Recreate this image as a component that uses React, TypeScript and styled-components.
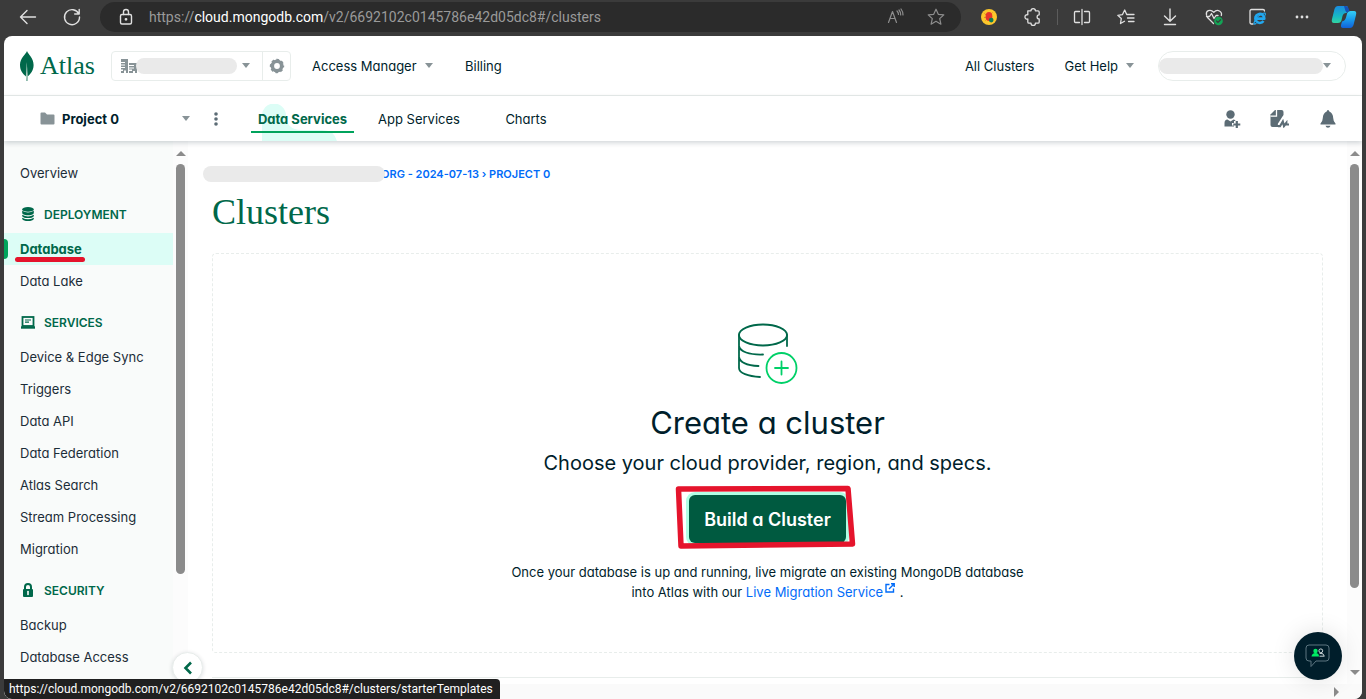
import React from "react";
import styled, { createGlobalStyle, css } from "styled-components";

const sans = `Inter, "Liberation Sans", sans-serif`;
const serif = `"Liberation Serif", serif`;
const system = `Roboto, "Open Sans", sans-serif`;
const green = "#00684a";
const ink = "#001e2b";
const line = "#e8edeb";
const grey = "#889397";
const slate = "#5c6c75";

const Global = createGlobalStyle`
  * { box-sizing: border-box; }
  body { margin: 0; background: #3b3b3b; font-family: ${sans}; font-feature-settings: "cv11"; font-size: 13px; color: ${ink}; }
  button { font: inherit; font-feature-settings: inherit; color: inherit; background: none; border: 0; padding: 0; margin: 0; cursor: pointer; }
  a { color: inherit; text-decoration: none; }
  h1, h2, p, ul { margin: 0; padding: 0; font-weight: 400; }
  ul { list-style: none; }
  svg { display: block; flex: none; }
`;

const Window = styled.div`
  position: relative;
  display: flex;
  flex-direction: column;
  height: 100vh;
  overflow: hidden;
`;

/* Browser toolbar */
const Toolbar = styled.div`
  display: flex;
  align-items: center;
  height: 36px;
  flex: none;
  padding: 0 2px 2px 6px;
  color: #e0e0e0;
`;
const ToolButton = styled.button<{ $w?: number }>`
  display: flex;
  align-items: center;
  justify-content: center;
  width: ${(p) => p.$w ?? 44}px;
  height: 30px;
`;
const AddressBar = styled.div`
  display: flex;
  align-items: center;
  flex: 1;
  height: 30px;
  margin: 0 6px;
  padding: 0 5px 0 6px;
  border-radius: 15px;
  background: #2b2b2b;
`;
const Address = styled.span`
  flex: 1;
  margin-left: 3px;
  font-family: ${system};
  font-size: 14px;
  color: #9a9a9a;
  white-space: nowrap;
  strong { font-weight: 400; color: #fff; }
`;
const ToolDivider = styled.span`
  width: 1px;
  height: 16px;
  margin: 0 2px;
  background: #5c5c5c;
`;

/* Web page */
const Page = styled.div`
  display: flex;
  flex-direction: column;
  flex: 1;
  min-height: 0;
  margin: 0 4px;
  border-radius: 8px;
  background: #fff;
  overflow: hidden;
`;
const Header = styled.header`
  display: flex;
  align-items: center;
  height: 60px;
  flex: none;
  padding: 0 16px 0 15px;
  border-bottom: 1px solid ${line};
`;
const Brand = styled.a`
  display: flex;
  align-items: center;
  gap: 5px;
  width: 92px;
  font-family: ${serif};
  font-size: 26px;
  line-height: 30px;
  color: ${green};
`;
const OrgPicker = styled.div`
  display: flex;
  height: 30px;
  border: 1px solid ${line};
  border-radius: 4px;
`;
const Redacted = styled.span`
  display: block;
  flex: 1;
  height: 16px;
  border-radius: 8px;
  background: #eaeaea;
`;
const OrgButton = styled.button`
  display: flex;
  align-items: center;
  width: 151px;
  padding: 0 12px 0 9px;
  border-right: 1px solid ${line};
  ${Redacted} { margin: 0 5px 0 -1px; }
`;
const GearButton = styled.button`
  display: flex;
  align-items: center;
  justify-content: center;
  width: 27px;
`;
const Caret = styled.span`
  width: 0;
  height: 0;
  border: 4px solid transparent;
  border-top: 5px solid ${grey};
  border-bottom: 0;
`;
const MainNav = styled.nav`
  display: grid;
  grid-template-columns: 153px auto;
  margin-left: 21px;
  flex: 1;
`;
const NavButton = styled.button`
  display: flex;
  align-items: center;
  gap: 8px;
  line-height: 20px;
  white-space: nowrap;
`;
const HelpNav = styled.nav`
  display: flex;
  align-items: center;
  gap: 30px;
`;
const AccountButton = styled.button`
  display: flex;
  align-items: center;
  width: 188px;
  height: 30px;
  margin-left: 24px;
  padding-right: 14px;
  border: 1px solid ${line};
  border-radius: 15px;
`;

const ProjectBar = styled.div`
  position: relative;
  z-index: 1;
  display: flex;
  align-items: center;
  height: 45px;
  flex: none;
  padding: 0 10px 0 36px;
  box-shadow: 0 2px 5px rgba(0, 30, 43, 0.18);
`;
const ProjectButton = styled.button`
  display: flex;
  align-items: center;
  gap: 7px;
  width: 150px;
  font-weight: 700;
  ${Caret} { margin-left: auto; }
`;
const MoreButton = styled.button`
  display: flex;
  justify-content: center;
  width: 52px;
`;
const Tabs = styled.nav`
  display: flex;
  flex: 1;
  margin-left: 9px;
`;
const Tab = styled.a<{ $active?: boolean }>`
  display: flex;
  align-items: center;
  justify-content: center;
  position: relative;
  width: ${(p) => (p.$active ? 103 : 130)}px;
  height: 45px;
  white-space: nowrap;
  span { position: relative; }
  & + & + & { width: 84px; }
  ${(p) =>
    p.$active &&
    css`
      font-weight: 700;
      color: ${green};
      &::after {
        content: "";
        position: absolute;
        left: 0;
        right: 0;
        bottom: 8px;
        height: 2px;
        background: #00a35c;
      }
    `}
`;
const TabBlob = styled.svg`
  position: absolute;
  left: 11px;
  bottom: 0;
`;
const IconButton = styled.button`
  display: flex;
  justify-content: center;
  width: 48px;
`;

const Body = styled.div`
  position: relative;
  display: flex;
  flex: 1;
  min-height: 0;
`;
const Sidebar = styled.nav`
  width: 169px;
  flex: none;
  padding-top: 16px;
  background: #f9fbfa;
  overflow: hidden;
`;
const SideLink = styled.a<{ $active?: boolean }>`
  display: flex;
  align-items: center;
  position: relative;
  height: 32px;
  padding-left: 16px;
  color: #1c2d38;
  white-space: nowrap;
  ${(p) =>
    p.$active &&
    css`
      background: #dcfdf6;
      color: ${green};
      font-weight: 700;
      &::before {
        content: "";
        position: absolute;
        left: 0;
        top: 6px;
        width: 4px;
        height: 20px;
        border-radius: 0 4px 4px 0;
        background: #00a35c;
      }
    `}
`;
const Underline = styled.span`
  position: absolute;
  left: 11px;
  bottom: 3px;
  width: 70px;
  height: 5px;
  border-radius: 3px;
  background: #e5142c;
`;
const SideHeading = styled.h2`
  display: flex;
  align-items: center;
  gap: 8px;
  height: 44px;
  padding: 6px 0 0 16px;
  font-size: 12px;
  font-weight: 600;
  color: ${green};
`;

const ScrollTrack = styled.div`
  display: flex;
  flex-direction: column;
  align-items: center;
  width: 15px;
  flex: none;
  padding: 10px 0 9px;
  background: #fcfcfc;
`;
const ScrollArrow = styled.span<{ $down?: boolean }>`
  border: 5px solid transparent;
  ${(p) =>
    p.$down
      ? "border-top-color: #8b8b8b; border-bottom: 0; margin-top: auto;"
      : "border-bottom-color: #8b8b8b; border-top: 0;"}
`;
const ScrollThumb = styled.span<{ $share: number }>`
  width: 9px;
  height: ${(p) => p.$share}%;
  margin-top: 8px;
  border-radius: 5px;
  background: #8b8b8b;
`;
const CollapseButton = styled.button`
  position: absolute;
  left: 168px;
  bottom: 16px;
  display: flex;
  align-items: center;
  justify-content: center;
  width: 31px;
  height: 31px;
  border: 1px solid ${line};
  border-radius: 50%;
  background: #fff;
  box-shadow: 0 1px 4px rgba(0, 30, 43, 0.15);
`;

const Column = styled.div`
  display: flex;
  flex-direction: column;
  flex: 1;
  min-width: 0;
`;
const Upper = styled.div`
  display: flex;
  flex: 1;
  min-height: 0;
`;
const Main = styled.main`
  flex: 1;
  min-width: 0;
  padding: 23px 24px 0;
  overflow: hidden;
`;
const Breadcrumb = styled.div`
  position: relative;
  padding-left: 169px;
  font-size: 11px;
  font-weight: 600;
  line-height: 20px;
  color: #016bf8;
  white-space: nowrap;
`;
const BreadcrumbMask = styled.span`
  position: absolute;
  left: -9px;
  top: 2px;
  width: 182px;
  height: 16px;
  border-radius: 8px;
  background: #eaeaea;
`;
const Title = styled.h1`
  margin-top: 8px;
  font-family: ${serif};
  font-size: 36px;
  line-height: 40px;
  color: ${green};
`;
const EmptyState = styled.section`
  display: flex;
  flex-direction: column;
  align-items: center;
  height: 400px;
  margin: 21px 0 24px;
  padding-top: 69px;
  border: 1px dashed ${line};
  border-radius: 4px;
  text-align: center;
`;
const Heading = styled.h2`
  margin-top: 18px;
  font-size: 31px;
  line-height: 40px;
`;
const Lead = styled.p`
  margin-top: 6px;
  font-size: 20px;
  line-height: 28px;
`;
const BuildWrap = styled.div`
  position: relative;
  margin-top: 18px;
`;
const BuildButton = styled.button`
  width: 157px;
  height: 48px;
  border-radius: 6px;
  background: #005a40;
  box-shadow: 0 0 0 3px #b1ffe5;
  color: #fff;
  font-size: 18px;
  font-weight: 600;
  white-space: nowrap;
`;
const Highlight = styled.svg`
  position: absolute;
  left: -14px;
  top: -11px;
  pointer-events: none;
`;
const Note = styled.p`
  margin-top: 19px;
  line-height: 20px;
  a { color: #016bf8; }
  svg { display: inline-block; vertical-align: 4px; margin: 0 1px 0 2px; }
`;
const Rule = styled.hr`
  margin: 0;
  border: 0;
  border-top: 1px solid ${line};
`;
const BottomTrack = styled.div`
  display: flex;
  align-items: center;
  justify-content: flex-end;
  height: 15px;
  flex: none;
  padding-right: 23px;
  background: #fafafa;
`;
const RightArrow = styled.span`
  border: 5px solid transparent;
  border-left-color: #8b8b8b;
  border-right: 0;
`;
const ChatButton = styled.button`
  position: absolute;
  right: 20px;
  bottom: 19px;
  display: flex;
  align-items: center;
  justify-content: center;
  width: 48px;
  height: 48px;
  border-radius: 50%;
  background: ${ink};
  box-shadow: 0 0 24px rgba(0, 0, 0, 0.12);
`;
const StatusBar = styled.div`
  position: absolute;
  left: 4px;
  bottom: 0;
  height: 20px;
  padding: 0 7px 0 5px;
  border-radius: 0 4px 0 8px;
  background: #202020;
  color: #fff;
  font-family: ${system};
  font-size: 12px;
  line-height: 20px;
  white-space: nowrap;
`;

const Stroke = ({ size = 20, w = 1.4, children, color = "currentColor" }: { size?: number; w?: number; color?: string; children: React.ReactNode }) => (
  <svg width={size} height={size} viewBox="0 0 20 20" fill="none" stroke={color} strokeWidth={w} strokeLinecap="round" strokeLinejoin="round">
    {children}
  </svg>
);

const BrowserToolbar = () => (
  <Toolbar>
    <ToolButton aria-label="Back">
      <Stroke><path d="M17.5 10H2.500M9 3.500L2.500 10L9 16.500" /></Stroke>
    </ToolButton>
    <ToolButton aria-label="Reload">
      <Stroke><path d="M16.800 7A7.500 7.500 0 1 0 17.500 10M17.200 2.500V7H12.700" /></Stroke>
    </ToolButton>
    <AddressBar>
      <ToolButton $w={40} aria-label="Site information">
        <Stroke>
          <rect x="4.500" y="7.500" width="11" height="9.500" rx="1.500" />
          <path d="M7.500 7.500V5a2.500 2.500 0 0 1 5 0V7.500" />
          <circle cx="10" cy="12.300" r=".7" fill="currentColor" />
        </Stroke>
      </ToolButton>
      <Address>https://<strong>cloud.mongodb.com</strong>/v2/6692102c0145786e42d05dc8#/clusters</Address>
      <ToolButton $w={40} aria-label="Read aloud">
        <Stroke color="#8d8d8d" w={1.2}>
          <path d="M2.500 15.500L6.500 4.500L10.500 15.500M4 11.500H9M11 4Q12.500 5.500 12.500 7.500M13 3Q14.700 5 14.700 8M15 2Q17 4.500 17 8" />
        </Stroke>
      </ToolButton>
      <ToolButton $w={40} aria-label="Add to favorites">
        <Stroke color="#8d8d8d" w={1.2}>
          <path d="M10 2.200L12.300 7.300L17.800 7.900L13.700 11.600L14.900 17.200L10 14.300L5.100 17.200L6.300 11.600L2.200 7.900L7.700 7.300Z" />
        </Stroke>
      </ToolButton>
    </AddressBar>
    <ToolButton aria-label="Bug extension">
      <svg width="16" height="16" viewBox="0 0 18 18">
        <circle cx="9" cy="9" r="9" fill="#fcc72b" />
        <path d="M4 5l2 2M3.500 9.500H6M5 13l1.500-1.500M12 5l1-1" stroke="#d9762a" />
        <ellipse cx="9" cy="8.500" rx="3.800" ry="5" fill="#e5352b" />
        <circle cx="11.500" cy="12.500" r="2.600" fill="#0c7a57" />
      </svg>
    </ToolButton>
    <ToolButton aria-label="Extensions">
      <Stroke w={1.3}>
        <path d="M5 3.800H8a2.200 2.200 0 0 1 4.400 0H15a1.200 1.200 0 0 1 1.200 1.200V7.800a2.100 2.100 0 0 0 0 4.200V15a1.200 1.200 0 0 1-1.200 1.200H12.400a2.200 2.200 0 0 1-4.400 0H6a1.200 1.200 0 0 1-1.200-1.200V12a2.200 2.200 0 1 1 0-4.200V3.800Z" />
      </Stroke>
    </ToolButton>
    <ToolDivider />
    <ToolButton aria-label="Split screen">
      <Stroke w={1.3}><path d="M7.500 4.500H3.500a1 1 0 0 0-1 1V14.500a1 1 0 0 0 1 1H7.500M12.500 4.500H16.500a1 1 0 0 1 1 1V14.500a1 1 0 0 1-1 1H12.500M10 2.500V17.500" /></Stroke>
    </ToolButton>
    <ToolButton aria-label="Favorites">
      <Stroke w={1.3}><path d="M13 7.500H10.700L8.700 3L6.400 7.700L1.800 8.300L5.300 11.500L4.500 16.500L8.500 14.300M12.500 7.500H18M11.500 11H18M12.500 14.500H18" /></Stroke>
    </ToolButton>
    <ToolButton aria-label="Downloads">
      <Stroke><path d="M10 2V14M4.500 9L10 14.300L15.500 9M4.500 17.500H15.500" /></Stroke>
    </ToolButton>
    <ToolButton aria-label="Browser essentials">
      <Stroke w={1.3}>
        <path d="M9.500 16.500L3.500 10.500M2.500 8C1.500 4 6 1.500 9.800 5.200C13.500 1.500 18.500 4.500 17.300 8.500M2.500 9.500H5.500L7.500 6.500L10 11.500L12 8.500H14" />
        <circle cx="14.500" cy="14" r="4.300" fill="#13a355" stroke="none" />
        <path d="M12.600 14L14 15.400L16.500 12.700" stroke="#3b3b3b" />
      </Stroke>
    </ToolButton>
    <ToolButton aria-label="Internet Explorer mode">
      <Stroke w={1.3}>
        <path d="M5 17H3.500a1.500 1.500 0 0 1-1.500-1.500V4a1.500 1.500 0 0 1 1.500-1.500H15A1.500 1.500 0 0 1 16.500 4" />
        <path d="M15.500 14A4.500 4.500 0 1 1 16.300 11.600H8" stroke="#22a7ee" strokeWidth="2.600" strokeLinecap="butt" />
        <path d="M8 16.500Q4.500 18.500 7 13.500Q10 8.500 14.500 6.500Q18 5 17.300 8" stroke="#22a7ee" strokeWidth="1.200" />
      </Stroke>
    </ToolButton>
    <ToolButton aria-label="Settings and more">
      <svg width="16" height="4" fill="currentColor"><circle cx="3" cy="2" r="1.400" /><circle cx="8" cy="2" r="1.400" /><circle cx="13" cy="2" r="1.400" /></svg>
    </ToolButton>
    <ToolButton $w={40} aria-label="Copilot">
      <svg width="26" height="24" viewBox="0 0 26 24">
        <defs>
          <linearGradient id="cpA" x1="0" y1="0" x2="0" y2="1"><stop offset="0" stopColor="#1a8be0" /><stop offset=".6" stopColor="#17b8c4" /><stop offset="1" stopColor="#32d4a0" /></linearGradient>
          <linearGradient id="cpB" x1="0" y1="0" x2="0" y2="1"><stop offset="0" stopColor="#35d0f5" /><stop offset=".5" stopColor="#189bec" /><stop offset="1" stopColor="#1261d8" /></linearGradient>
        </defs>
        <path d="M7 1H15Q17.500 1 17 4L16 8Q12.500 7.500 11.500 11L10.300 16Q9.500 18 7 18H3Q0 18 1 14L3.500 4Q4.500 1 7 1Z" fill="url(#cpA)" />
        <path d="M19 23H12Q9.500 23 10 20L11 16.500Q14 16 15 12.500L16.200 8Q17 6 19.500 6H23Q26 6 25 10L22.500 20Q21.500 23 19 23Z" fill="url(#cpB)" />
        <path d="M13 1Q17 .5 17.800 4L18.500 6Q16.500 6.500 16 8L14.500 6Z" fill="#1450b8" />
      </svg>
    </ToolButton>
  </Toolbar>
);

const Leaf = () => (
  <svg width="16" height="30" viewBox="0 0 16 30">
    <path d="M8 0C9 3 14.600 7 14.600 14C14.600 20 11 23.500 8.600 25.500L8.400 30H7.400L7.100 25.500C4 23 1 20 1 14C1 7 7 3 8 0Z" fill={green} />
    <path d="M7.700 11L8.800 25.300L8.400 30H7.400L6.900 25.300Z" fill="#a8c9bd" />
  </svg>
);

const ServerIcon = () => (
  <svg width="16" height="16" viewBox="0 0 16 16" fill={green}>
    <ellipse cx="8" cy="3.400" rx="5.800" ry="2.400" />
    <path d="M2.200 4.800Q8 8.400 13.800 4.800V7.200Q12.500 9.200 8 9.200T2.200 7.200ZM2.200 8.800Q8 12 13.800 8.800V10.200Q12.500 12.100 8 12.100T2.200 10.200ZM2.200 11.700Q8 15 13.800 11.700V12.900Q12.500 15 8 15T2.200 12.900Z" />
  </svg>
);
const LaptopIcon = () => (
  <svg width="16" height="16" viewBox="0 0 16 16" fill="none" stroke={green}>
    <rect x="2.500" y="3" width="11" height="9" strokeWidth="1.800" />
    <path d="M5 6H11M5 8.200H9" strokeWidth="1.200" />
    <path d="M1 13.500H15" strokeWidth="2.400" />
  </svg>
);
const LockIcon = () => (
  <svg width="16" height="16" viewBox="0 0 16 16">
    <path d="M5 8V5a3 3 0 0 1 6 0V8" fill="none" stroke={green} strokeWidth="2" />
    <rect x="3" y="7" width="10" height="8" rx="1" fill={green} />
    <path d="M8 9.500V12.500" stroke="#fff" strokeWidth="1.600" strokeLinecap="round" />
  </svg>
);

const sections = [
  { title: "DEPLOYMENT", icon: <ServerIcon />, links: ["Database", "Data Lake"] },
  {
    title: "SERVICES",
    icon: <LaptopIcon />,
    links: ["Device & Edge Sync", "Triggers", "Data API", "Data Federation", "Atlas Search", "Stream Processing", "Migration"],
  },
  { title: "SECURITY", icon: <LockIcon />, links: ["Backup", "Database Access"] },
];

export default function App() {
  return (
    <Window>
      <Global />
      <BrowserToolbar />
      <Page>
        <Header>
          <Brand href="#/"><Leaf />Atlas</Brand>
          <OrgPicker>
            <OrgButton aria-label="Organization">
              <svg width="16" height="14" viewBox="0 0 16 14" fill={grey}>
                <path d="M0 0H7V14H5V11.500H3V14H0V12H2V10.500H0V9H4V8H0V6.500H4V5.500H0V4H4V3H0ZM8 4H16V14H14V12H12V14H8V12H11V10.500H8V9.500H13V8.500H8V7H13V6H8Z" />
              </svg>
              <Redacted />
              <Caret />
            </OrgButton>
            <GearButton aria-label="Organization settings">
              <svg width="16" height="16" viewBox="0 0 16 16" fill="none" stroke={grey}>
                <circle cx="8" cy="8" r="4.700" strokeWidth="3.600" />
                <circle cx="8" cy="8" r="6.400" strokeWidth="1.600" strokeDasharray="2.800 2.226" strokeDashoffset="1.400" />
              </svg>
            </GearButton>
          </OrgPicker>
          <MainNav>
            <NavButton>Access Manager <Caret /></NavButton>
            <NavButton>Billing</NavButton>
          </MainNav>
          <HelpNav>
            <NavButton>All Clusters</NavButton>
            <NavButton>Get Help <Caret /></NavButton>
          </HelpNav>
          <AccountButton aria-label="Account"><Redacted /><Caret /></AccountButton>
        </Header>

        <ProjectBar>
          <ProjectButton>
            <svg width="15" height="13" viewBox="0 0 15 13" fill={grey}><path d="M1.500 .5H5L7 2.500H13.500Q14.500 2.500 14.500 3.500V11.500Q14.500 12.500 13.500 12.500H1.500Q.5 12.500 .5 11.500V1.500Q.5 .5 1.500 .5Z" /></svg>
            Project 0
            <Caret />
          </ProjectButton>
          <MoreButton aria-label="Project options">
            <svg width="4" height="14" fill={slate}><circle cx="2" cy="2" r="1.800" /><circle cx="2" cy="7" r="1.800" /><circle cx="2" cy="12" r="1.800" /></svg>
          </MoreButton>
          <Tabs>
            <Tab href="#/clusters" $active>
              <TabBlob width="76" height="37" viewBox="0 0 76 37"><path d="M0 37V12A12 12 0 0 1 24 11Q24 26 40 26H60Q72 26 75 37Z" fill="#dcfdf6" /></TabBlob>
              <span>Data Services</span>
            </Tab>
            <Tab href="#/apps">App Services</Tab>
            <Tab href="#/charts">Charts</Tab>
          </Tabs>
          <IconButton aria-label="Invite to project">
            <svg width="18" height="18" viewBox="0 0 18 18" fill={slate}>
              <circle cx="7.500" cy="4.500" r="4.200" />
              <path d="M1.500 16.500V13Q1.500 9.500 4.500 9.500L7.500 11.500L10.500 9.500Q12.500 9.700 12.500 11H11V13H9V15.500H11V16.500Z" />
              <path d="M13.800 11V18M10.300 14.500H17.300" stroke={slate} strokeWidth="2.200" />
            </svg>
          </IconButton>
          <IconButton aria-label="Activity feed">
            <svg width="20" height="18" viewBox="0 0 20 18">
              <path d="M5 0H11.500Q13.500 0 13.500 2V10L9 17H2.500Q.5 17 .5 15V4.500Z" fill={slate} />
              <path d="M6.500 0V6.200H.5" fill="none" stroke="#fff" strokeWidth="1.300" />
              <path d="M8 15.500H9.500L12.700 10.500L14 15.500L16 12.500V14.500H19" fill="none" stroke="#fff" strokeWidth="4.600" />
              <path d="M8 16.200H10L12.800 11.500L14 16L16.300 13V14.500H19" fill="none" stroke={slate} strokeWidth="2.200" />
            </svg>
          </IconButton>
          <IconButton aria-label="Alerts">
            <svg width="16" height="18" viewBox="0 0 16 18" fill={slate}>
              <path d="M8 0Q9.200 0 9.300 1.500Q13 3 13.200 8Q13.200 11 15.500 13.500V14.500H.5V13.500Q2.800 11 2.800 8Q3 3 6.700 1.500Q6.800 0 8 0ZM5.500 15.700H10.500Q10 17.700 8 17.700T5.500 15.700Z" />
            </svg>
          </IconButton>
        </ProjectBar>

        <Body>
          <Sidebar>
            <SideLink href="#/overview">Overview</SideLink>
            {sections.map((s) => (
              <React.Fragment key={s.title}>
                <SideHeading>{s.icon}{s.title}</SideHeading>
                <ul>
                  {s.links.map((l) => (
                    <li key={l}>
                      <SideLink href="#/clusters" $active={l === "Database"}>
                        {l}
                        {l === "Database" && <Underline />}
                      </SideLink>
                    </li>
                  ))}
                </ul>
              </React.Fragment>
            ))}
          </Sidebar>
          <ScrollTrack>
            <ScrollArrow />
            <ScrollThumb $share={76} />
          </ScrollTrack>
          <Column>
            <Upper>
              <Main>
                <Breadcrumb>
                  <a href="#/org">ORG - 2024-07-13</a> › <a href="#/project">PROJECT 0</a>
                  <BreadcrumbMask />
                </Breadcrumb>
                <Title>Clusters</Title>
                <EmptyState>
                  <svg width="62" height="62" viewBox="0 0 62 62" fill="none" strokeWidth="1.800" strokeLinecap="round">
                    <g stroke={green}>
                      <ellipse cx="26" cy="12" rx="24" ry="10.500" />
                      <path d="M2 12V45C2 50 11 53.500 23 54M50 12V23M2 23C3 28.500 12 32 26 31.500M2 34C3 39.500 11 42.500 21.500 43" />
                    </g>
                    <g stroke="#00d068"><circle cx="44.500" cy="45" r="15" /><path d="M44.500 38.500V51.500M38 45H51" /></g>
                  </svg>
                  <Heading>Create a cluster</Heading>
                  <Lead>Choose your cloud provider, region, and specs.</Lead>
                  <BuildWrap>
                    <BuildButton>Build a Cluster</BuildButton>
                    <Highlight width="184" height="66" viewBox="0 0 184 66" fill="none" stroke="#e5142c" strokeWidth="5.500" strokeLinejoin="round">
                      <path d="M3.500 5L173 4.500L177.500 60L6 62Z" />
                    </Highlight>
                  </BuildWrap>
                  <Note>
                    Once your database is up and running, live migrate an existing MongoDB database<br />into Atlas with our{" "}
                    <a href="#/migrate">
                      Live Migration Service
                      <svg width="10" height="10" viewBox="0 0 10 10" fill="none" stroke="#016bf8" strokeWidth="1.400"><path d="M4.500 1.500H1V9H8.500V5.500M4 6L8.500 1.500M6 .8H9.200V4" /></svg>
                    </a>{" "}
                    .
                  </Note>
                </EmptyState>
                <Rule />
              </Main>
              <ScrollTrack>
                <ScrollArrow />
                <ScrollThumb $share={81} />
                <ScrollArrow $down />
              </ScrollTrack>
            </Upper>
            <BottomTrack><RightArrow /></BottomTrack>
          </Column>
          <CollapseButton aria-label="Collapse navigation">
            <svg width="10" height="14" viewBox="0 0 10 14" fill="none" stroke={green} strokeWidth="2.600"><path d="M8 1.500L2.500 7L8 12.500" /></svg>
          </CollapseButton>
          <ChatButton aria-label="Chat">
            <svg width="26" height="24" viewBox="0 0 26 24" fill="none">
              <path d="M4 1H21Q24 1 24 4V14Q24 17 21 17H11L6 22.500V17H4Q1 17 1 14V4Q1 1 4 1Z" stroke="#5c7580" />
              <g fill="#00ed64"><circle cx="10.500" cy="7" r="2.200" /><path d="M6.500 12.500Q7 9 10.500 9T14 12.500Z" /></g>
              <g stroke="#dfe8ea" strokeWidth=".9"><circle cx="15.800" cy="6.800" r="1.900" /><path d="M14.500 9.300Q18.800 8.800 19.300 12.200H14.500" /></g>
            </svg>
          </ChatButton>
        </Body>
      </Page>
      <StatusBar>https://cloud.mongodb.com/v2/6692102c0145786e42d05dc8#/clusters/starterTemplates</StatusBar>
    </Window>
  );
}
